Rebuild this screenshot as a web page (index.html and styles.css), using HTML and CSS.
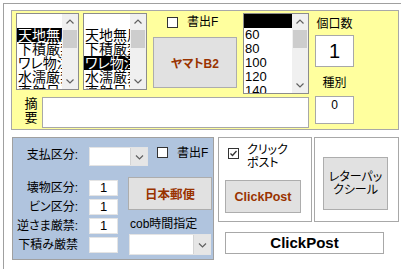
FILE: index.html
```html
<!DOCTYPE html>
<html lang="ja">
<head>
    <meta charset="UTF-8">
    <title>出荷設定</title>
    <link rel="stylesheet" href="styles.css">
</head>
<body>

<div class="frame">

    <!-- 上段: 黄色パネル -->
    <div class="yellow">
        <div class="y-main">
            <div class="y-top">
                <div class="listbox lb1">
                    <div class="items">
                        <div class="item"></div>
                        <div class="item sel">天地無用</div>
                        <div class="item">下積厳禁</div>
                        <div class="item">ワレ物注意</div>
                        <div class="item">水濡厳禁</div>
                        <div class="item">直射日光厳禁</div>
                    </div>
                    <div class="sbar">
                        <svg class="arr" width="16" height="16" viewBox="0 0 16 16"><path d="M4.5 9.5 L8 6 L11.5 9.5"/></svg>
                        <div class="track"><div class="thumb"></div></div>
                        <svg class="arr" width="16" height="16" viewBox="0 0 16 16"><path d="M4.5 6.5 L8 10 L11.5 6.5"/></svg>
                    </div>
                </div>

                <div class="listbox lb2">
                    <div class="items">
                        <div class="item"></div>
                        <div class="item">天地無用</div>
                        <div class="item">下積厳禁</div>
                        <div class="item sel">ワレ物注意</div>
                        <div class="item">水濡厳禁</div>
                        <div class="item">直射日光厳禁</div>
                    </div>
                    <div class="sbar">
                        <svg class="arr" width="16" height="16" viewBox="0 0 16 16"><path d="M4.5 9.5 L8 6 L11.5 9.5"/></svg>
                        <div class="track"><div class="thumb"></div></div>
                        <svg class="arr" width="16" height="16" viewBox="0 0 16 16"><path d="M4.5 6.5 L8 10 L11.5 6.5"/></svg>
                    </div>
                </div>

                <div class="mid">
                    <div class="check-row">
                        <span class="cbox"></span>
                        <span class="check-label">書出F</span>
                    </div>
                    <div class="btn btn-yamato">ヤマトB2</div>
                </div>

                <div class="listbox lb3">
                    <div class="items num">
                        <div class="item sel"></div>
                        <div class="item">60</div>
                        <div class="item">80</div>
                        <div class="item">100</div>
                        <div class="item">120</div>
                        <div class="item">140</div>
                    </div>
                    <div class="sbar">
                        <svg class="arr" width="16" height="16" viewBox="0 0 16 16"><path d="M4.5 9.5 L8 6 L11.5 9.5"/></svg>
                        <div class="track"><div class="thumb"></div></div>
                        <svg class="arr" width="16" height="16" viewBox="0 0 16 16"><path d="M4.5 6.5 L8 10 L11.5 6.5"/></svg>
                    </div>
                </div>
            </div>

            <div class="memo-row">
                <div class="memo-label">摘<br>要</div>
                <div class="memo-box"></div>
            </div>
        </div>

        <div class="y-side">
            <div class="side-label">個口数</div>
            <div class="count-box">1</div>
            <div class="side-label kind">種別</div>
            <div class="kind-box">0</div>
        </div>
    </div>

    <!-- 下段 -->
    <div class="lower">
        <div class="blue">
            <div class="pay-row">
                <div class="b-label">支払区分:</div>
                <div class="combo combo-pay"><span class="field"></span><span class="drop"><svg width="9" height="6" viewBox="0 0 9 6"><path d="M1 1.5 L4.5 5 L8 1.5"/></svg></span></div>
                <span class="cbox"></span>
                <span class="check-label">書出F</span>
            </div>
            <div class="b-body">
                <div class="b-left">
                    <div class="b-row"><div class="b-label">壊物区分:</div><div class="num-box">1</div></div>
                    <div class="b-row"><div class="b-label">ビン区分:</div><div class="num-box">1</div></div>
                    <div class="b-row"><div class="b-label">逆さま厳禁:</div><div class="num-box">1</div></div>
                    <div class="b-row"><div class="b-label">下積み厳禁</div><div class="num-box"></div></div>
                </div>
                <div class="b-right">
                    <div class="btn btn-yubin">日本郵便</div>
                    <div class="cob-label">cob時間指定</div>
                    <div class="combo combo-cob"><span class="field"></span><span class="drop"><svg width="9" height="6" viewBox="0 0 9 6"><path d="M1 1.5 L4.5 5 L8 1.5"/></svg></span></div>
                </div>
            </div>
        </div>

        <div class="post-col">
            <div class="post-frames">
                <div class="group click-group">
                    <div class="click-row">
                        <svg class="checked" width="11" height="11" viewBox="0 0 11 11"><rect x="0.5" y="0.5" width="10" height="10"/><path d="M2.5 5.5 L4.5 7.5 L8.5 3"/></svg>
                        <div class="click-label">クリック<br>ポスト</div>
                    </div>
                    <div class="btn btn-click">ClickPost</div>
                </div>
                <div class="group letter-group">
                    <div class="btn btn-letter">レターパッ<br>クシール</div>
                </div>
            </div>
            <div class="post-name">ClickPost</div>
        </div>
    </div>

</div>

</body>
</html>
```

FILE: styles.css
```css
body {
    margin: 0;
    background: #fff;
    overflow: hidden;
    font-family: "Liberation Sans", "Noto Sans CJK JP", sans-serif;
    font-size: 12px;
    color: #000;
    font-feature-settings: "palt";
}

.frame {
    box-sizing: border-box;
    width: 398px;
    height: 266px;
    margin: 3px 0 0 3px;
    border-top: 1px solid #a0a0a0;
    border-left: 1px solid #a0a0a0;
}

/* 黄色パネル */
.yellow {
    box-sizing: border-box;
    display: flex;
    width: 388px;
    height: 120px;
    margin: 6px 0 0 7px;
    padding: 2px 0 0 4px;
    background: #ffff9e;
    border: 1px solid #a8a8a8;
}

.y-main {
    display: flex;
    flex-direction: column;
    width: 293px;
}

.y-top {
    display: flex;
    align-items: flex-start;
    height: 81px;
}

.listbox {
    box-sizing: border-box;
    display: flex;
    background: #fff;
    border: 1px solid #8c8c8c;
    overflow: hidden;
}

.lb1 { width: 63px; height: 77px; }
.lb2 { width: 64px; height: 77px; margin-left: 4px; }
.lb3 { width: 66px; height: 81px; margin-left: 6px; }

.items {
    flex: 1;
    overflow: hidden;
    font-size: 14px;
    line-height: 14px;
}

.items.num {
    font-size: 13px;
}

.item {
    height: 14px;
    padding-left: 1px;
    white-space: nowrap;
    overflow: hidden;
}

.item.sel {
    background: #000;
    color: #fff;
}

.sbar {
    display: flex;
    flex-direction: column;
    width: 16px;
    background: #f0f0f0;
}

.arr {
    display: block;
    flex: none;
}

.arr path {
    fill: none;
    stroke: #606060;
    stroke-width: 1.2;
}

.track {
    flex: 1;
}

.thumb {
    height: 18px;
    margin: 0 1px;
    background: #cdcdcd;
}

.mid {
    width: 84px;
    margin-left: 6px;
}

.check-row {
    display: flex;
    align-items: center;
    height: 12px;
    margin-top: 3px;
    padding-left: 14px;
}

.cbox {
    box-sizing: border-box;
    flex: none;
    width: 11px;
    height: 11px;
    background: #fff;
    border: 1px solid #333;
}

.check-label {
    margin-left: 9px;
    line-height: 14px;
}

.btn {
    box-sizing: border-box;
    display: flex;
    align-items: center;
    justify-content: center;
    text-align: center;
    background: #e1e1e1;
    border: 1px solid #adadad;
    color: #993300;
    font-weight: bold;
}

.btn-yamato {
    height: 51px;
    margin-top: 9px;
    font-size: 12px;
}

.memo-row {
    display: flex;
    margin-top: 3px;
}

.memo-label {
    width: 14px;
    margin-left: 8px;
    font-size: 13px;
    line-height: 14px;
    text-align: center;
}

.memo-box {
    box-sizing: border-box;
    width: 267px;
    height: 31px;
    margin-left: 4px;
    background: #fff;
    border: 1px solid #a8a8a8;
}

.y-side {
    display: flex;
    flex-direction: column;
    width: 39px;
    margin-left: 6px;
}

.side-label {
    margin-top: 4px;
    line-height: 14px;
    text-align: center;
}

.side-label.kind {
    margin-top: 9px;
}

.count-box {
    box-sizing: border-box;
    height: 32px;
    margin-top: 4px;
    background: #fff;
    border: 1px solid #a8a8a8;
    font-size: 20px;
    line-height: 30px;
    text-align: center;
}

.kind-box {
    box-sizing: border-box;
    height: 28px;
    margin-top: 6px;
    padding-top: 1px;
    background: #fff;
    border: 1px solid #a8a8a8;
    font-size: 12px;
    line-height: 14px;
    text-align: center;
}

/* 下段 */
.lower {
    display: flex;
    margin: 7px 0 0 8px;
}

.blue {
    box-sizing: border-box;
    width: 202px;
    height: 123px;
    padding-top: 9px;
    background: #b0c4de;
    border: 1px solid #a0a0a0;
}

.pay-row {
    display: flex;
    align-items: flex-start;
    height: 19px;
}

.b-label {
    flex: none;
    width: 65px;
    line-height: 16px;
    text-align: right;
    white-space: nowrap;
}

.combo {
    box-sizing: border-box;
    display: flex;
    background: #fff;
    border: 1px solid #e4e4e4;
}

.combo .field {
    flex: 1;
}

.combo .drop {
    display: flex;
    align-items: center;
    justify-content: center;
    width: 16px;
    background: #e6e6e6;
    border-left: 1px solid #d4d4d4;
}

.combo .drop path {
    fill: none;
    stroke: #606060;
    stroke-width: 1.2;
}

.combo-pay {
    width: 59px;
    height: 19px;
    margin-left: 11px;
}

.pay-row .cbox {
    margin-left: 9px;
}

.pay-row .check-label {
    line-height: 12px;
}

.b-body {
    display: flex;
}

.b-left {
    display: flex;
    flex-direction: column;
    gap: 3px;
    margin-top: 14px;
}

.b-row {
    display: flex;
    height: 16px;
}

.num-box {
    box-sizing: border-box;
    width: 29px;
    height: 16px;
    margin-left: 11px;
    background: #fff;
    border: 1px solid #e4e4e4;
    font-size: 13px;
    line-height: 14px;
    text-align: center;
}

.b-right {
    width: 84px;
    margin-left: 10px;
}

.btn-yubin {
    height: 33px;
    margin-top: 11px;
    font-size: 12.5px;
}

.cob-label {
    margin-top: 6px;
    padding-left: 2px;
    line-height: 16px;
}

.combo-cob {
    width: 82px;
    height: 21px;
    margin: 2px 0 0 1px;
}

.post-col {
    margin-left: 4px;
}

.post-frames {
    display: flex;
}

.group {
    box-sizing: border-box;
    height: 85px;
    border: 1px solid #a8a8a8;
    box-shadow: inset 1px 1px 0 #fff;
}

.click-group {
    width: 94px;
}

.letter-group {
    width: 85px;
    margin-left: 2px;
}

.click-row {
    display: flex;
    align-items: flex-start;
    padding: 6px 0 0 9px;
}

.checked {
    display: block;
    margin-top: 4px;
}

.checked rect {
    fill: #fff;
    stroke: #333;
}

.checked path {
    fill: none;
    stroke: #333;
    stroke-width: 1.3;
}

.click-label {
    margin-left: 8px;
    line-height: 13px;
}

.btn-click {
    width: 76px;
    height: 33px;
    margin: 10px 0 0 6px;
    font-size: 12.5px;
}

.btn-letter {
    width: 65px;
    height: 53px;
    margin: 19px 0 0 8px;
    color: #000;
    font-weight: normal;
    line-height: 13px;
}

.post-name {
    box-sizing: border-box;
    width: 159px;
    height: 22px;
    margin: 10px 0 0 7px;
    border: 1px solid #a8a8a8;
    font-size: 15px;
    font-weight: bold;
    line-height: 20px;
    text-align: center;
}
```
